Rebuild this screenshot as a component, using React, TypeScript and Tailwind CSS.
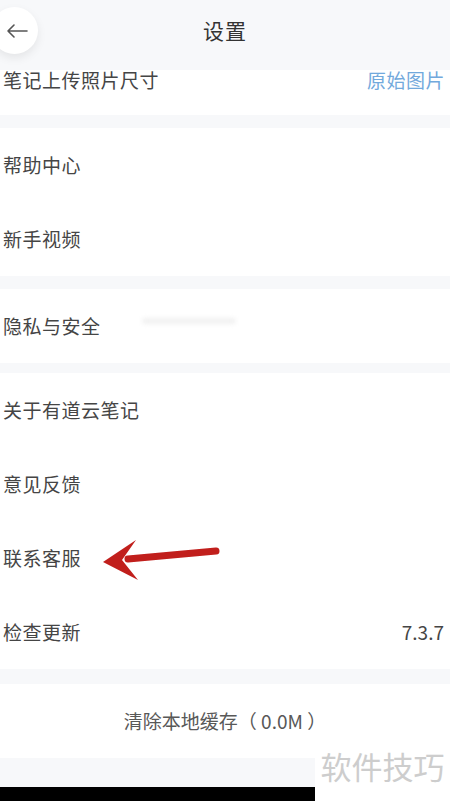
import React from 'react';

const font = { fontFamily: '"Noto Sans CJK SC", "Noto Sans", sans-serif' };

function Row({ label, value, center }: { label: string; value?: string; center?: boolean }) {
  return (
    <div className={`h-[74px] flex items-center ${center ? 'justify-center' : 'justify-between'} pl-[3px] pr-[6px]`}>
      <span className="text-[19px] text-[#454545] tracking-[0.5px]">{label}</span>
      {value && <span className="text-[19px] text-[#454545]">{value}</span>}
    </div>
  );
}

export default function App() {
  return (
    <div className="relative w-[450px] h-[801px] overflow-hidden bg-[#f7f8fa]" style={font}>
      {/* header */}
      <header className="h-[70px] relative flex justify-center pt-[16px]">
        <div className="absolute left-[-9px] top-[7px] w-[47px] h-[47px] rounded-full bg-white shadow-[0_4px_10px_rgba(0,0,0,0.08)] flex items-center justify-end pr-[9px]">
          <svg width="23" height="16" viewBox="0 0 23 16" fill="none" stroke="#555" strokeWidth="1.6" strokeLinecap="round" strokeLinejoin="round">
            <path d="M21 8H2M8 2L2 8l6 6" />
          </svg>
        </div>
        <h1 className="text-[21px] leading-[28px] text-[#333] tracking-[1px]">设置</h1>
      </header>

      <div className="bg-white h-[45px] pl-[3px] pr-[5px] flex justify-between">
        <div className="h-[20px] flex items-center text-[19px] text-[#454545] tracking-[0.5px]">笔记上传照片尺寸</div>
        <div className="h-[20px] flex items-center text-[19px] text-[#72a9dc] tracking-[0.5px]">原始图片</div>
      </div>

      <div className="mt-[13px] bg-white">
        <Row label="帮助中心" />
        <Row label="新手视频" />
      </div>

      <div className="mt-[13px] bg-white relative">
        <Row label="隐私与安全" />
        <div className="absolute left-[142px] top-[29px] w-[94px] h-[6px] rounded-full bg-[#f1f1f1] blur-[2px]" />
      </div>

      <div className="mt-[10px] bg-white">
        <Row label="关于有道云笔记" />
        <Row label="意见反馈" />
        <Row label="联系客服" />
        <Row label="检查更新" value="7.3.7" />
      </div>

      <div className="mt-[15px] bg-white">
        <div className="h-[74px] flex items-center justify-center">
          <span className="text-[19px] text-[#585858]">清除本地缓存（ 0.0M ）</span>
        </div>
      </div>

      <div className="mt-[29px] w-[315px] h-[20px] bg-black" />

      {/* annotation arrow */}
      <svg className="absolute left-[98px] top-[535px]" width="126" height="50" viewBox="0 0 126 50">
        <path d="M118 16 L30 24" stroke="#c11f1c" strokeWidth="7" strokeLinecap="round" />
        <path d="M5 27 L38 5 L24 25 L40 45 Z" fill="#c11f1c" />
      </svg>

      {/* watermark */}
      <div className="absolute left-[315px] top-[746px] w-[135px] h-[55px] bg-white flex items-start justify-center">
        <span className="text-[31px] leading-[40px] text-[#cdcdcd]">软件技巧</span>
      </div>
    </div>
  );
}
